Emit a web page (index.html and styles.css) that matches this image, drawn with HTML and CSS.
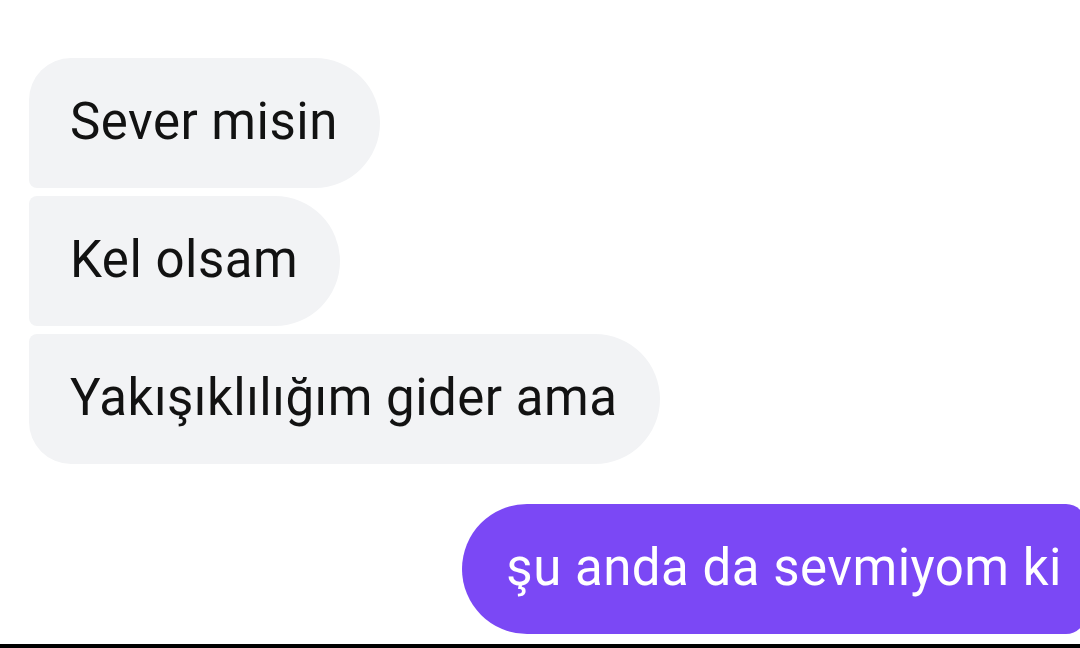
FILE: index.html
```html
<!DOCTYPE html>
<html lang="tr">
<head>
<meta charset="utf-8">
<link rel="stylesheet" href="styles.css">
</head>
<body>
<div class="screen">
  <div class="thread">
    <div class="msg in first">Sever misin</div>
    <div class="msg in mid">Kel olsam</div>
    <div class="msg in last">Yakışıklılığım gider ama</div>
    <div class="msg out">şu anda da sevmiyom ki</div>
  </div>
  <div class="bar"></div>
</div>
</body>
</html>
```
FILE: styles.css
```css
html, body {
  margin: 0;
  padding: 0;
  background: #ffffff;
}
.screen {
  width: 1080px;
  height: 648px;
  display: flex;
  flex-direction: column;
  overflow: hidden;
  font-family: Roboto, "Liberation Sans", sans-serif;
}
.thread {
  display: flex;
  flex-direction: column;
  align-items: flex-start;
  padding: 58px 0 0 29px;
  gap: 8px;
}
.msg {
  height: 130px;
  box-sizing: border-box;
  display: flex;
  align-items: center;
  font-size: 51px;
  letter-spacing: 0.5px;
  padding: 0 42px 4px 41px;
  white-space: nowrap;
}
.in {
  background: #f2f3f5;
  color: #121212;
}
.first { border-radius: 42px 65px 65px 8px; }
.mid { border-radius: 8px 65px 65px 8px; }
.last { border-radius: 8px 65px 65px 42px; }
.out {
  align-self: flex-end;
  margin-top: 32px;
  margin-right: -6px;
  background: #7b48f5;
  color: #ffffff;
  border-radius: 65px 20px 20px 65px;
  padding: 0 24px 4px 44px;
}
.bar {
  margin-top: auto;
  height: 4px;
  background: #000000;
}
```
